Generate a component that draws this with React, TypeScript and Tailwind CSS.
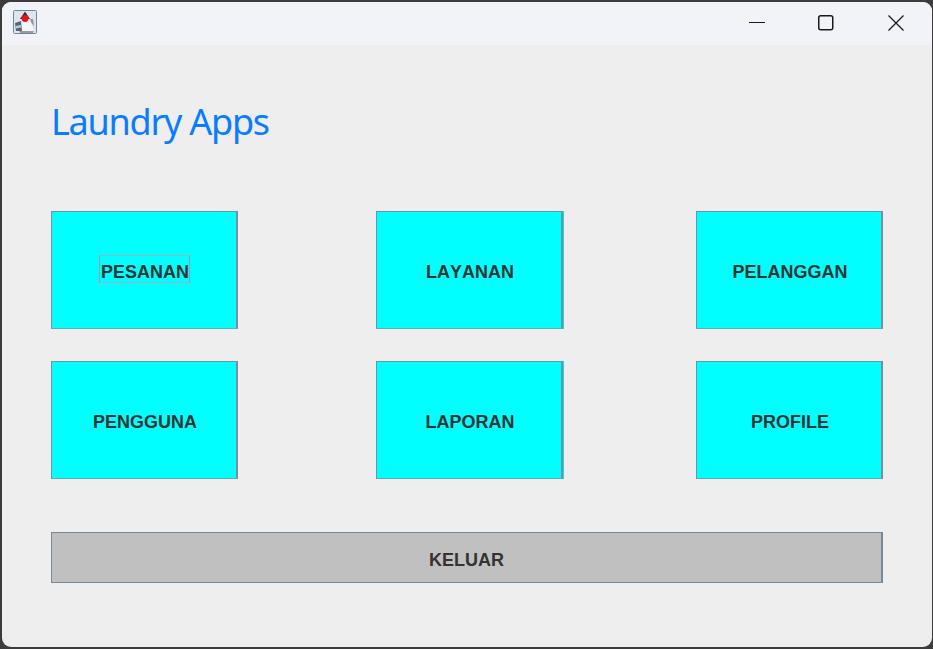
const menu = ["PESANAN", "LAYANAN", "PELANGGAN", "PENGGUNA", "LAPORAN", "PROFILE"];

function JavaIcon() {
  return (
    <svg width="24" height="24" viewBox="0 0 24 24" className="block">
      <rect x="0.5" y="0.5" width="23" height="23" rx="1" fill="#dfe5ec" stroke="#6f87a3" />
      <path d="M7 11 H17 L21 21 L20 23 H6 L5 20 Z" fill="#f6f6f6" />
      <path d="M12 1.5 L17 9 H7 Z" fill="#2f2f38" />
      <path d="M2 13 L8 11 L9 21 L3 21 Z" fill="#5a646e" />
      <path d="M2.5 16 L8 15 L8 17.5 L3 18.5 Z" fill="#a8d0ea" />
      <path d="M17 9 L20 9 L21 16 L18.5 13 Z" fill="#8f9499" />
      <path d="M6 21 H21 L20 23 H7 Z" fill="#9a9a9a" />
      <circle cx="12" cy="8.5" r="3.4" fill="#ee1118" />
    </svg>
  );
}

function MenuButton({ label, focused, middle }: { label: string; focused?: boolean; middle?: boolean }) {
  return (
    <button
      className={
        "flex h-[118px] w-[187px] items-center justify-center border border-[#6d93a8] border-r-2 border-r-[#7f8c9c] border-b-[#58b0c4] bg-[#00ffff] pl-[2px] pt-[5px] font-['Liberation_Sans',sans-serif] text-[18px] font-bold text-[#333333] [font-kerning:none] " +
        (middle ? "shadow-[1px_0_0_#00e6ee]" : "")
      }
    >
      <span className={focused ? "relative block w-[88px] whitespace-nowrap text-center" : "relative"}>
        {label}
        {focused && (
          <span className="absolute -left-[2px] -right-[1px] -top-[4px] bottom-[3px] border border-[#a0aebf] border-x-[#8f9db0]" />
        )}
      </span>
    </button>
  );
}

export default function App() {
  return (
    <div className="h-[649px] w-[933px] overflow-hidden bg-[#3c3c3c] py-[2px] pl-[2px] pr-[1px]">
      <div className="flex h-full flex-col overflow-hidden rounded-[9px] bg-[#eeeeee]">
        <header className="flex h-[43px] shrink-0 justify-between bg-[#f2f3f9] pl-[11px] pr-[28px]">
          <div className="pt-[8px]">
            <JavaIcon />
          </div>
          <div className="flex items-center pb-[1px] text-[#1a1a1a]">
            <svg width="16" height="16" viewBox="0 0 16 16" fill="none" stroke="currentColor">
              <path d="M0 7.5 H16" strokeWidth="1.1" />
            </svg>
            <svg width="16" height="16" viewBox="0 0 16 16" fill="none" stroke="currentColor" className="ml-[53px]">
              <rect x="0.75" y="0.75" width="14" height="14" rx="2" strokeWidth="1.5" />
            </svg>
            <svg width="16" height="16" viewBox="0 0 16 16" fill="none" stroke="currentColor" className="ml-[54px]">
              <path d="M0.5 0.5 L15.5 15.5 M15.5 0.5 L0.5 15.5" strokeWidth="1.3" />
            </svg>
          </div>
        </header>

        <main className="flex flex-1 flex-col pl-[49px]">
          <h1 className="mt-[52px] mb-[2px] h-[50px] font-['Noto_Sans',sans-serif] text-[36px] leading-[50px] tracking-[-1.25px] text-[#0a7cff]">
            Laundry Apps
          </h1>

          <div className="mt-[62px] grid grid-cols-[325px_320px_187px] gap-y-[32px]">
            {menu.map((label) => (
              <MenuButton
                key={label}
                label={label}
                focused={label === "PESANAN"}
                middle={label === "LAYANAN" || label === "LAPORAN"}
              />
            ))}
          </div>

          <button className="mt-[53px] h-[51px] w-[832px] border border-[#75899c] border-r-2 bg-[#c0c0c0] pt-[5px] font-['Liberation_Sans',sans-serif] text-[18px] font-bold text-[#333333] [font-kerning:none]">
            KELUAR
          </button>
        </main>
      </div>
    </div>
  );
}
